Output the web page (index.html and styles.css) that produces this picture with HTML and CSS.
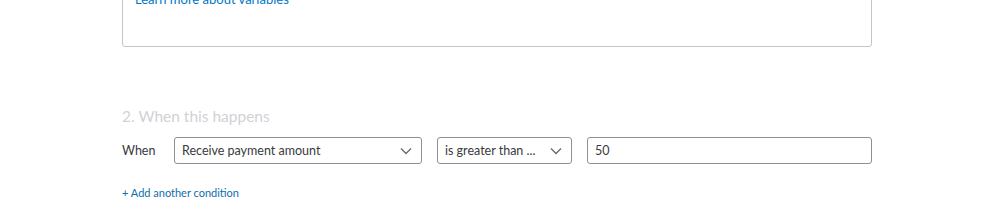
FILE: index.html
```html
<!DOCTYPE html>
<html>
<head>
<meta charset="utf-8">
<link rel="stylesheet" href="styles.css">
</head>
<body>
<div class="page">
  <div class="varbox">
    <a class="link" href="#">Learn more about variables</a>
  </div>
  <h2 class="heading">2. When this happens</h2>
  <div class="row">
    <span class="label">When</span>
    <div class="select sel1"><span>Receive payment amount</span>
      <svg class="chev" width="12" height="8" viewBox="0 0 12 8"><path d="M1 1.5 L6 6.5 L11 1.5" fill="none" stroke="#6b6c72" stroke-width="1.4"/></svg>
    </div>
    <div class="select sel2"><span>is greater than ...</span>
      <svg class="chev" width="12" height="8" viewBox="0 0 12 8"><path d="M1 1.5 L6 6.5 L11 1.5" fill="none" stroke="#6b6c72" stroke-width="1.4"/></svg>
    </div>
    <div class="input">50</div>
  </div>
  <a class="add" href="#">+ Add another condition</a>
</div>
</body>
</html>
```
FILE: styles.css
```css
html, body { margin: 0; padding: 0; background: #fff; }
body { font-family: "Lato", "Open Sans", sans-serif; color: #393a3d; overflow: hidden; }
.page { padding-left: 122px; width: 750px; }
.varbox {
  margin-top: -20px;
  height: 67px;
  border: 1px solid #c4c4c4;
  border-radius: 3px;
  padding: 7px 12px 0;
  box-sizing: border-box;
}
.link { color: #0077c5; text-decoration: none; font-size: 13px; line-height: 16px; }
.heading {
  margin: 59px 0 0;
  font-size: 15.5px;
  font-weight: 400;
  line-height: 20px;
  color: #d0d2d6;
}
.row { display: flex; align-items: center; margin-top: 11px; height: 27px; }
.label { font-size: 12.5px; width: 52px; }
.select, .input {
  height: 27px;
  box-sizing: border-box;
  border: 1px solid #8d9096;
  border-radius: 3px;
  display: flex;
  align-items: center;
  padding: 0 8px 0 7px;
  font-size: 12.5px;
  color: #393a3d;
}
.select { justify-content: space-between; }
.sel1 { width: 248px; }
.sel2 { width: 135px; margin-left: 15px; }
.input { width: 285px; margin-left: 15px; }
.chev { margin-right: 1px; }
.add {
  display: inline-block;
  margin-top: 22px;
  font-size: 11px;
  color: #0d6faa;
  text-decoration: none;
}
```
